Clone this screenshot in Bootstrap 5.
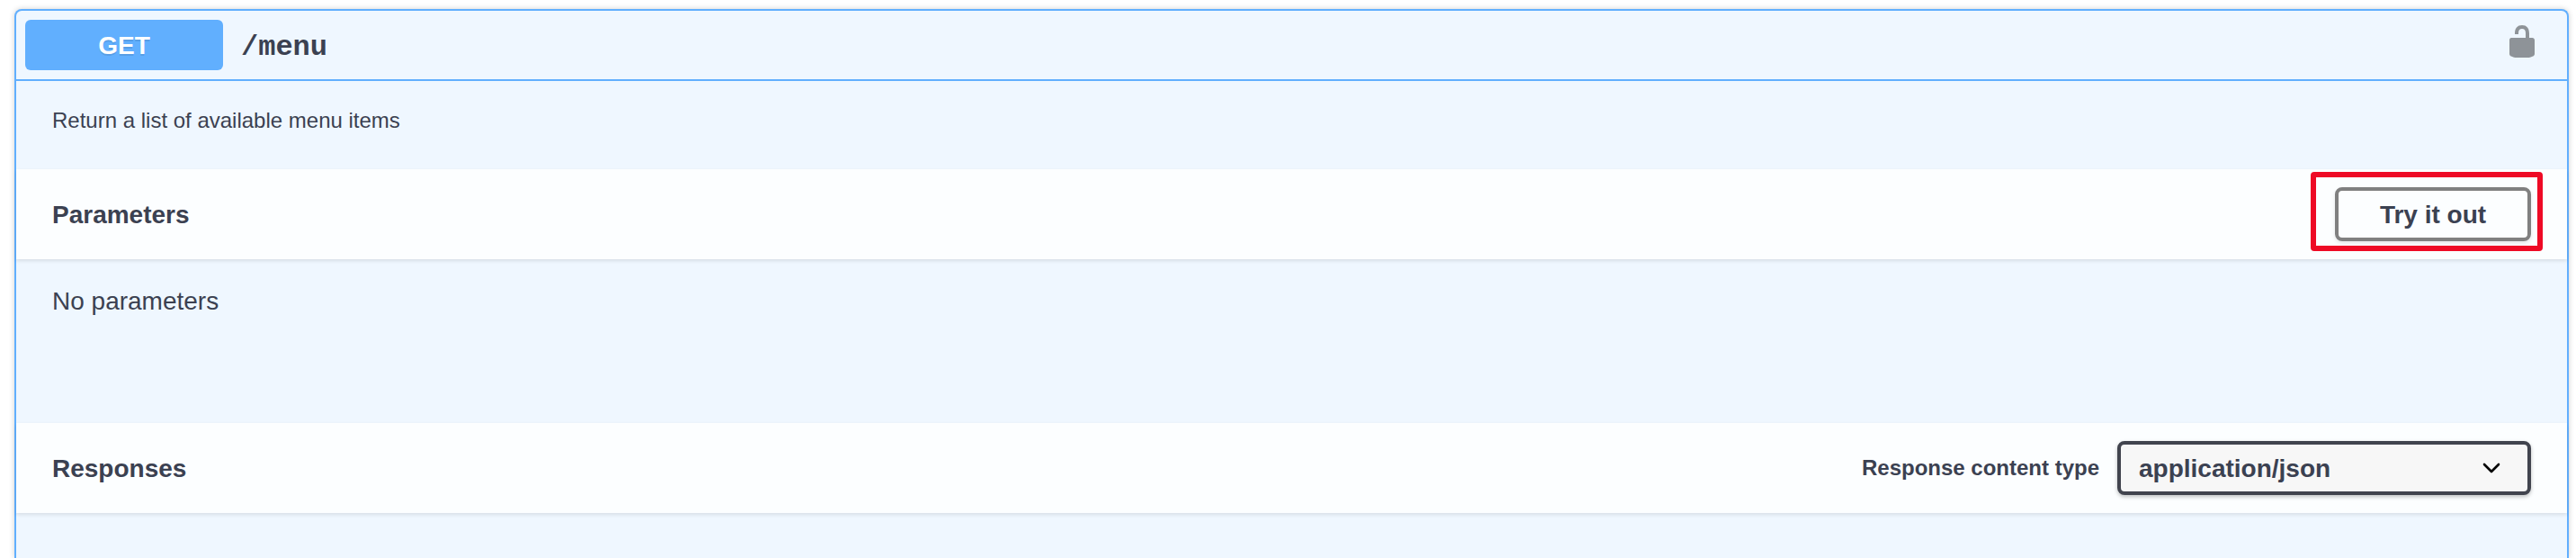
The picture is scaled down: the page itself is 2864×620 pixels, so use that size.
<!DOCTYPE html>
<html lang="en">
<head>
<meta charset="utf-8">
<title>API operation</title>
<link href="https://cdn.jsdelivr.net/npm/bootstrap@5.3.0/dist/css/bootstrap.min.css" rel="stylesheet">
<style>
body { font-family: "Liberation Sans", Arial, sans-serif; color: #3b4151; background: #fff; height: 620px; overflow: hidden; line-height: 1.15; padding-top: 10px; }
.opblock { margin: 0 8px 0 16px; height: 610px; border: 2px solid #61affe; border-bottom: 0; border-radius: 8px 8px 0 0; background: #eff7ff; box-shadow: 0 0 6px rgba(0,0,0,.19); }
.op-summary { height: 78px; padding: 0 30px 0 10px; border-bottom: 2px solid #61affe; }
.method { width: 220px; height: 56px; padding-top: 2px; border-radius: 6px; background: #61affe; font-size: 28px; line-height: 32px; text-shadow: 0 2px 0 rgba(0,0,0,.1); }
.path { font: bold 32px/36px "Liberation Mono", "Courier New", monospace; padding: 5px 0 0 20px; }
.lock { margin-top: -8px; opacity: .4; }
.op-desc { height: 98px; padding: 30px 40px 0; font-size: 24px; }
.op-head { height: 100px; padding: 0 40px; background: rgba(255,255,255,.8); box-shadow: 0 2px 4px rgba(0,0,0,.1); font-size: 28px; }
.op-head h4 { font-size: 28px; line-height: 32px; padding-top: 2px; }
.op-body { height: 182px; padding: 31px 40px 0; font-size: 28px; line-height: 32px; }
.try-btn, .try-btn:hover { width: 218px; height: 60px; border: 4px solid gray; border-radius: 8px; font-size: 28px; line-height: 32px; padding: 2px 0 0; color: #3b4151; box-shadow: 0 2px 4px rgba(0,0,0,.1); }
.callout { left: -27px; top: -17px; width: 258px; height: 88px; border: 6px solid #ee0a25; border-radius: 4px; pointer-events: none; }
.type-label { font-size: 24px; line-height: 28px; margin-right: 20px; }
.type-select { width: 460px; height: 60px; border: 4px solid #41444e; border-radius: 8px; background: #f7f7f7; box-shadow: 0 2px 4px rgba(0,0,0,.25); padding: 0 30px 0 20px; font-size: 28px; line-height: 32px; }
.type-select span { padding-top: 2px; }
</style>
</head>
<body>
<main class="opblock">
  <div class="op-summary d-flex align-items-center">
    <span class="method d-flex align-items-center justify-content-center fw-bold text-white">GET</span>
    <span class="path">/menu</span>
    <svg class="lock ms-auto" width="40" height="40" viewBox="0 0 20 20" aria-label="Unlocked"><path d="M15.8 8H14V5.6C14 2.703 12.665 1 10 1 7.334 1 6 2.703 6 5.6V6h2v-.801C8 3.754 8.797 3 10 3c1.203 0 2 .754 2 2.199V8H4c-.553 0-1 .646-1 1.199V17c0 .549.428 1.139.951 1.307l1.197.387C5.672 18.861 6.55 19 7.1 19h5.8c.549 0 1.428-.139 1.951-.307l1.196-.387c.524-.167.953-.757.953-1.306V9.199C17 8.646 16.352 8 15.8 8z"/></svg>
  </div>
  <div class="op-desc">Return a list of available menu items</div>
  <div class="op-head d-flex align-items-center justify-content-between">
    <h4 class="fw-bold m-0">Parameters</h4>
    <div class="position-relative">
      <button type="button" class="btn try-btn fw-bold d-block">Try it out</button>
      <span class="callout position-absolute"></span>
    </div>
  </div>
  <div class="op-body">No parameters</div>
  <div class="op-head d-flex align-items-center">
    <h4 class="fw-bold m-0 me-auto">Responses</h4>
    <span class="type-label fw-bold">Response content type</span>
    <div class="type-select d-flex align-items-center justify-content-between fw-bold" role="combobox" tabindex="0">
      <span>application/json</span>
      <svg width="20" height="12" viewBox="0 0 20 12" fill="none" stroke="#000" stroke-width="2.6" stroke-linecap="round" stroke-linejoin="round"><path d="M2 2l8 8 8-8"/></svg>
    </div>
  </div>
</main>
<script src="https://cdn.jsdelivr.net/npm/bootstrap@5.3.0/dist/js/bootstrap.bundle.min.js"></script>
</body>
</html>
